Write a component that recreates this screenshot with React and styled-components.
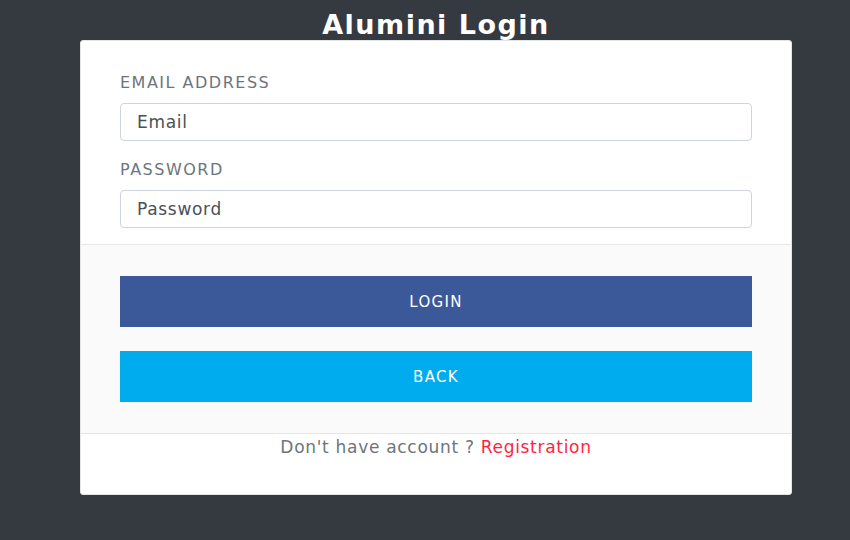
import styled, { createGlobalStyle } from "styled-components"

const Global = createGlobalStyle`
  html, body {
    margin: 0;
    padding: 0;
    background: #353a41;
    font-family: "DejaVu Sans", "Open Sans", sans-serif;
  }
`

const Page = styled.div`
  display: flex;
  flex-direction: column;
  align-items: center;
  min-height: 540px;
  padding-left: 22px;
`

const Title = styled.h1`
  margin: 0;
  height: 40px;
  line-height: 50px;
  font-size: 27px;
  letter-spacing: 1.5px;
  font-weight: 700;
  color: #fff;
`

const Card = styled.div`
  width: 710px;
  background: #fff;
  border: 1px solid #e3e4e6;
  border-radius: 3px;
  display: flex;
  flex-direction: column;
`

const Body = styled.div`
  padding: 30px 39px 16px;
  display: flex;
  flex-direction: column;
`

const Label = styled.label`
  font-size: 16px;
  letter-spacing: 1.5px;
  color: #6c757d;
  line-height: 24px;
  margin-bottom: 8px;
`

const Input = styled.input`
  height: 38px;
  box-sizing: border-box;
  border: 1px solid #ced4da;
  border-radius: 4px;
  padding: 0 16px;
  font-family: inherit;
  font-size: 17px;
  letter-spacing: 0.7px;
  color: #495057;
  margin-bottom: ${(p) => p.$gap}px;
  &::placeholder {
    color: #495057;
  }
`

const Footer = styled.div`
  background: #fafafa;
  border-top: 1px solid #e6e6e6;
  border-bottom: 1px solid #e6e6e6;
  padding: 31px 39px 31px;
  display: flex;
  flex-direction: column;
  gap: 24px;
`

const Button = styled.button`
  height: 51px;
  border: none;
  background: ${(p) => p.$bg};
  color: #fff;
  font-family: inherit;
  font-size: 15px;
  letter-spacing: 1.3px;
  text-transform: uppercase;
  cursor: pointer;
`

const Bottom = styled.p`
  margin: 0;
  padding: 2px 0 36px;
  text-align: center;
  font-size: 17px;
  letter-spacing: 0.7px;
  line-height: 22px;
  color: #6c757d;
`

const Link = styled.a`
  color: #ff1f45;
  text-decoration: none;
`

export default function App() {
  return (
    <>
      <Global />
      <Page>
        <Title>Alumini Login</Title>
        <Card>
          <Body>
            <Label>EMAIL ADDRESS</Label>
            <Input type="email" placeholder="Email" $gap={17} />
            <Label>PASSWORD</Label>
            <Input type="password" placeholder="Password" $gap={0} />
          </Body>
          <Footer>
            <Button $bg="#3b5998">Login</Button>
            <Button $bg="#00acee">Back</Button>
          </Footer>
          <Bottom>
            Don't have account ? <Link href="#">Registration</Link>
          </Bottom>
        </Card>
      </Page>
    </>
  )
}
